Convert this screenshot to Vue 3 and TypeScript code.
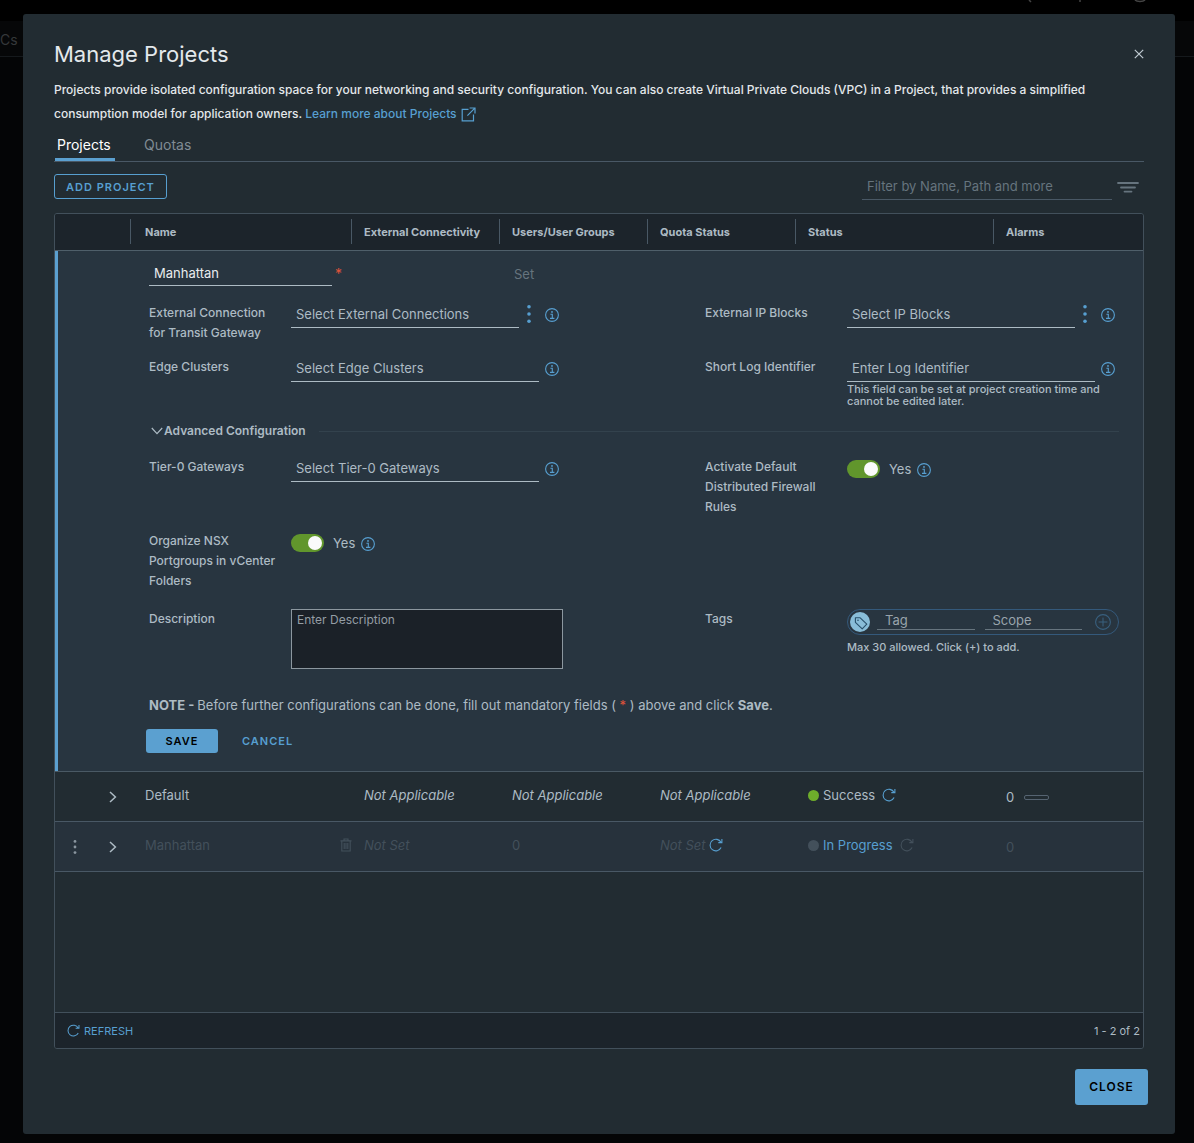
<script setup lang="ts">
import { ref } from 'vue'

interface Project {
  name: string
  connectivity: string
  users: string
  quota: string
  status: string
  alarms: string
  pending: boolean
}

const projects: Project[] = [
  {
    name: 'Default',
    connectivity: 'Not Applicable',
    users: 'Not Applicable',
    quota: 'Not Applicable',
    status: 'Success',
    alarms: '0',
    pending: false,
  },
  {
    name: 'Manhattan',
    connectivity: 'Not Set',
    users: '0',
    quota: 'Not Set',
    status: 'In Progress',
    alarms: '0',
    pending: true,
  },
]

const projectName = ref('Manhattan')
const firewallRules = ref(true)
const vcenterFolders = ref(true)
</script>

<template>
  <div class="page">
    <svg width="0" height="0" class="sprite" aria-hidden="true">
      <symbol id="info" viewBox="0 0 14 14">
        <circle cx="7" cy="7" r="6.4" fill="none" stroke="currentColor" stroke-width="1.1" />
        <circle cx="7" cy="3.9" r="0.95" fill="currentColor" />
        <path d="M5.4 6.2h1.9v4.2M5 10.4h4.4" fill="none" stroke="currentColor" stroke-width="1.1" />
      </symbol>
      <symbol id="dots" viewBox="0 0 4 18">
        <circle cx="2" cy="1.8" r="1.8" fill="currentColor" />
        <circle cx="2" cy="9" r="1.8" fill="currentColor" />
        <circle cx="2" cy="16.2" r="1.8" fill="currentColor" />
      </symbol>
      <symbol id="refresh" viewBox="0 0 14 14">
        <path d="M12.1 9.6A5.8 5.8 0 1 1 12 4.3M12.9 1v3.6H9.3" fill="none" stroke="currentColor" stroke-width="1.1" />
      </symbol>
      <symbol id="chevron" viewBox="0 0 8 12">
        <path d="M1 1l5.4 5L1 11" fill="none" stroke="currentColor" stroke-width="1.5" />
      </symbol>
      <symbol id="trash" viewBox="0 0 12 14">
        <path d="M0.5 2.9h11M4 2.6V1h4v1.6M1.8 3v10h8.4V3M4.2 5v6M6 5v6M7.8 5v6" fill="none" stroke="currentColor" stroke-width="1.1" />
      </symbol>
    </svg>

    <div class="behind" aria-hidden="true">
      <div class="behind-top">
        <svg width="120" height="3" viewBox="0 0 120 3">
          <path d="M2 0l2 2M53 0v2M108 0c2 2 8 2 10 0" fill="none" stroke="#444" stroke-width="1.5" />
        </svg>
      </div>
      <div class="behind-tabs">Cs</div>
    </div>

    <main class="modal" role="dialog" aria-labelledby="title">
      <header class="head">
        <h1 id="title">Manage Projects</h1>
        <button type="button" class="x" aria-label="Close dialog">
          <svg width="10" height="10" viewBox="0 0 10 10">
            <path d="M0.8 0.8l8.4 8.4M9.2 0.8L0.8 9.2" stroke="currentColor" stroke-width="1.2" />
          </svg>
        </button>
      </header>
      <p class="intro">
        Projects provide isolated configuration space for your networking and security configuration. You can also create
        Virtual Private Clouds (VPC) in a Project, that provides a simplified consumption model for application owners.
        <a href="#projects">Learn more about Projects<svg width="15" height="15" viewBox="0 0 15 15">
            <path d="M7.5 2.3H1.2v11.5h11.3V7.6M6.4 8.6L13.8 1.2M8.6 1h5.4v5.4" fill="none" stroke="currentColor" stroke-width="1.2" />
          </svg></a>
      </p>

      <div class="tabs" role="tablist">
        <button type="button" role="tab" class="tab active" aria-selected="true">Projects</button>
        <button type="button" role="tab" class="tab" aria-selected="false">Quotas</button>
      </div>

      <div class="toolbar">
        <button type="button" class="btn outline">ADD PROJECT</button>
        <div class="filter">
          <input type="text" placeholder="Filter by Name, Path and more" aria-label="Filter" />
          <button type="button" class="bare" aria-label="Filter options">
            <svg width="22" height="12" viewBox="0 0 22 12">
              <path d="M1 2h20M4 6.5h14M7.5 10.6h7" stroke="currentColor" stroke-width="1.8" stroke-linecap="round" />
            </svg>
          </button>
        </div>
      </div>

      <section class="grid">
        <table>
          <colgroup>
            <col class="c-act" /><col /><col class="c-mid" /><col class="c-mid" /><col class="c-mid" /><col class="c-status" /><col class="c-alarm" />
          </colgroup>
          <thead>
            <tr>
              <th><div>&nbsp;</div></th>
              <th class="name"><div>Name</div></th>
              <th><div>External Connectivity</div></th>
              <th><div>Users/User Groups</div></th>
              <th><div>Quota Status</div></th>
              <th><div>Status</div></th>
              <th><div>Alarms</div></th>
            </tr>
          </thead>
          <tbody>
            <tr class="edit">
              <td colspan="7">
                <form @submit.prevent>
                  <div class="name-row">
                    <input v-model="projectName" type="text" class="line name-input" aria-label="Name" required />
                    <span class="req">*</span>
                    <button type="button" class="bare set" disabled>Set</button>
                  </div>

                  <div class="fields">
                    <div class="field">
                      <label for="ext">External Connection for Transit Gateway</label>
                      <div class="control">
                        <input id="ext" type="text" class="line" placeholder="Select External Connections" />
                        <button type="button" class="bare more" aria-label="More actions"><svg width="4" height="18"><use href="#dots" /></svg></button>
                        <button type="button" class="bare info" aria-label="Info"><svg width="14" height="14"><use href="#info" /></svg></button>
                      </div>
                    </div>
                    <div class="field">
                      <label for="ip">External IP Blocks</label>
                      <div class="control">
                        <input id="ip" type="text" class="line" placeholder="Select IP Blocks" />
                        <button type="button" class="bare more" aria-label="More actions"><svg width="4" height="18"><use href="#dots" /></svg></button>
                        <button type="button" class="bare info" aria-label="Info"><svg width="14" height="14"><use href="#info" /></svg></button>
                      </div>
                    </div>
                    <div class="field">
                      <label for="edge">Edge Clusters</label>
                      <div class="control">
                        <input id="edge" type="text" class="line" placeholder="Select Edge Clusters" />
                        <button type="button" class="bare info" aria-label="Info"><svg width="14" height="14"><use href="#info" /></svg></button>
                      </div>
                    </div>
                    <div class="field">
                      <label for="log">Short Log Identifier</label>
                      <div>
                        <div class="control">
                          <input id="log" type="text" class="line" placeholder="Enter Log Identifier" />
                          <button type="button" class="bare info" aria-label="Info"><svg width="14" height="14"><use href="#info" /></svg></button>
                        </div>
                        <p class="hint">This field can be set at project creation time and cannot be edited later.</p>
                      </div>
                    </div>

                    <button type="button" class="bare advanced" aria-expanded="true">
                      <svg width="12" height="8" viewBox="0 0 12 8">
                        <path d="M0.8 1L6 6.6 11.2 1" fill="none" stroke="currentColor" stroke-width="1.2" />
                      </svg>
                      <span>Advanced Configuration</span>
                      <i></i>
                    </button>

                    <div class="field">
                      <label for="tier">Tier-0 Gateways</label>
                      <div class="control">
                        <input id="tier" type="text" class="line" placeholder="Select Tier-0 Gateways" />
                        <button type="button" class="bare info" aria-label="Info"><svg width="14" height="14"><use href="#info" /></svg></button>
                      </div>
                    </div>
                    <div class="field">
                      <label for="fw">Activate Default Distributed Firewall Rules</label>
                      <div class="control switch">
                        <input id="fw" v-model="firewallRules" type="checkbox" class="toggle" />
                        <span>Yes</span>
                        <button type="button" class="bare info" aria-label="Info"><svg width="14" height="14"><use href="#info" /></svg></button>
                      </div>
                    </div>
                    <div class="field wide">
                      <label for="folders">Organize NSX Portgroups in vCenter Folders</label>
                      <div class="control switch">
                        <input id="folders" v-model="vcenterFolders" type="checkbox" class="toggle" />
                        <span>Yes</span>
                        <button type="button" class="bare info" aria-label="Info"><svg width="14" height="14"><use href="#info" /></svg></button>
                      </div>
                    </div>
                    <div class="field">
                      <label for="desc">Description</label>
                      <textarea id="desc" placeholder="Enter Description"></textarea>
                    </div>
                    <div class="field">
                      <label for="tag">Tags</label>
                      <div>
                        <div class="pill">
                          <span class="tag-mark">
                            <svg width="14" height="14" viewBox="0 0 14 14">
                              <path d="M1.4 6.3V1.8h4.8l6.6 6.3-4.6 4.7z" fill="none" stroke="currentColor" stroke-width="1.1" stroke-linejoin="round" />
                              <circle cx="4" cy="4.3" r="0.8" fill="currentColor" />
                            </svg>
                          </span>
                          <input id="tag" type="text" placeholder="Tag" />
                          <input type="text" placeholder="Scope" aria-label="Scope" />
                          <button type="button" class="bare plus" aria-label="Add tag">
                            <svg width="16" height="16" viewBox="0 0 16 16">
                              <path d="M8 3.6v8.8M3.6 8h8.8" stroke="currentColor" stroke-width="1" />
                              <circle cx="8" cy="8" r="7.4" fill="none" stroke="currentColor" stroke-width="1.1" />
                            </svg>
                          </button>
                        </div>
                        <p class="hint tags-hint">Max 30 allowed. Click (+) to add.</p>
                      </div>
                    </div>
                  </div>

                  <p class="note">
                    <b>NOTE - </b>Before further configurations can be done, fill out mandatory fields (
                    <span class="req-mark">*</span> ) above and click <b>Save</b>.
                  </p>
                  <div class="actions">
                    <button type="submit" class="btn solid">SAVE</button>
                    <button type="button" class="btn flat">CANCEL</button>
                  </div>
                </form>
              </td>
            </tr>

            <tr v-for="p in projects" :key="p.name" class="row" :class="{ pending: p.pending }">
              <td>
                <div class="act">
                  <span><button v-if="p.pending" type="button" class="bare" aria-label="Row actions"><svg width="4" height="14"><use href="#dots" /></svg></button></span>
                  <button type="button" class="bare caret" aria-label="Expand"><svg width="8" height="12"><use href="#chevron" /></svg></button>
                </div>
              </td>
              <td class="name">
                <div class="cell spread">
                  {{ p.name }}
                  <svg v-if="p.pending" width="12" height="14"><use href="#trash" /></svg>
                </div>
              </td>
              <td><em>{{ p.connectivity }}</em></td>
              <td>
                <span v-if="p.pending">{{ p.users }}</span>
                <em v-else>{{ p.users }}</em>
              </td>
              <td>
                <div class="cell">
                  <em>{{ p.quota }}</em>
                  <button v-if="p.pending" type="button" class="bare link quota" aria-label="Refresh quota"><svg width="14" height="14"><use href="#refresh" /></svg></button>
                </div>
              </td>
              <td>
                <div class="cell">
                  <span class="dot"></span>
                  <span class="state">{{ p.status }}</span>
                  <button type="button" class="bare reload" aria-label="Refresh status"><svg width="14" height="14"><use href="#refresh" /></svg></button>
                </div>
              </td>
              <td class="alarm">
                <div class="cell">{{ p.alarms }}<span v-if="!p.pending" class="bar"></span></div>
              </td>
            </tr>
          </tbody>
        </table>
        <div class="filler"></div>
        <footer class="grid-foot">
          <button type="button" class="bare link">
            <svg width="13" height="13"><use href="#refresh" /></svg>REFRESH
          </button>
          <span>1 - 2 of 2</span>
        </footer>
      </section>

      <div class="modal-foot">
        <button type="button" class="btn solid big">CLOSE</button>
      </div>
    </main>
  </div>
</template>

<style>
body {
  background: #040506;
}
</style>

<style scoped>
* {
  box-sizing: border-box;
}
.page {
  position: relative;
  display: flex;
  min-height: 100vh;
  padding: 14px 19px 9px 23px;
  color: #adbbc4;
  font: 13px/20px Inter, "Noto Sans", sans-serif;
}
.sprite {
  position: absolute;
}
.behind {
  position: absolute;
  inset: 0;
}
.behind-top {
  display: flex;
  justify-content: flex-end;
  height: 21px;
  padding-right: 47px;
  background: #000;
}
.behind-tabs {
  height: 36px;
  border-bottom: 1px solid #15191c;
  background: #060708;
  color: #35383a;
  font-size: 14px;
  line-height: 38px;
}
.modal {
  position: relative;
  display: flex;
  flex: 1;
  flex-direction: column;
  min-width: 0;
  padding: 26px 31px 29px;
  border-radius: 3px;
  background: #222c32;
}
button,
input,
textarea {
  font: inherit;
  color: inherit;
}
button {
  cursor: pointer;
}
svg {
  display: block;
  flex: none;
}
.bare {
  display: flex;
  align-items: center;
  padding: 0;
  border: 0;
  background: none;
}
.head {
  display: flex;
  justify-content: space-between;
}
h1 {
  margin: 0;
  color: #e4e9ec;
  font-size: 22px;
  font-weight: 400;
  line-height: 28px;
}
.x {
  display: flex;
  align-items: center;
  padding: 0;
  border: 0;
  background: none;
  color: #c0cbd2;
}
.intro {
  margin: 10px 0 0;
  color: #e4e8eb;
  font-size: 12px;
  font-weight: 500;
  line-height: 24px;
}
a {
  display: inline-flex;
  align-items: center;
  gap: 4px;
  height: 24px;
  color: #579fd0;
  text-decoration: none;
  vertical-align: top;
}
.tabs {
  display: flex;
  gap: 27px;
  padding-left: 1px;
  border-bottom: 1px solid #495865;
}
.tab {
  min-width: 60px;
  padding: 9px 2px 3px;
  border: 0;
  border-bottom: 3px solid transparent;
  background: none;
  color: #808b94;
  font-size: 14px;
  text-align: left;
}
.tab.active {
  border-color: #5ba0d0;
  color: #fff;
}
.toolbar {
  display: flex;
  justify-content: space-between;
  margin: 12px 0 13px;
}
.btn {
  height: 24px;
  padding: 0 12px;
  border: 0;
  border-radius: 3px;
  background: none;
  color: #579fd0;
  font-size: 11px;
  font-weight: 600;
  letter-spacing: 1px;
}
.outline {
  height: 25px;
  padding: 0 11px;
  border: 1px solid #579fd0;
}
.solid {
  width: 72px;
  background: #5ba0d0;
  color: #000;
}
.big {
  width: 73px;
  height: 36px;
  font-size: 12px;
}
.filter {
  display: flex;
  gap: 5px;
  padding-right: 5px;
  color: #66747e;
}
.filter input {
  width: 250px;
  height: 26px;
  padding: 0 5px 1px;
  border: 0;
  border-bottom: 1px solid #495865;
  background: none;
}
::placeholder {
  color: inherit;
  opacity: 1;
}
.grid {
  display: flex;
  flex: 1;
  flex-direction: column;
  overflow: hidden;
  border: 1px solid #42505b;
  border-radius: 3px;
}
table {
  width: 100%;
  border-collapse: separate;
  border-spacing: 0;
  table-layout: fixed;
}
.c-act {
  width: 76px;
}
.c-mid {
  width: 148px;
}
.c-status {
  width: 198px;
}
.c-alarm {
  width: 149px;
}
th {
  padding: 5px 0 6px;
  border-bottom: 1px solid #4f5f6a;
  background: #1c242b;
  text-align: left;
  font-size: 11px;
  font-weight: 700;
  white-space: nowrap;
}
th div {
  height: 25px;
  padding-left: 12px;
  border-right: 1px solid #495865;
  line-height: 26px;
}
th.name div {
  padding-left: 14px;
}
th:last-child div {
  border: 0;
}
.edit td {
  padding: 0;
  border-bottom: 1px solid #4a5964;
  background: #283540;
}
form {
  padding: 10px 24px 18px 91px;
  border-left: 3px solid #5ba0d0;
}
.name-row {
  display: flex;
  align-items: center;
}
.line {
  flex: 1;
  min-width: 0;
  height: 25px;
  padding: 0 5px 2px;
  border: 0;
  border-bottom: 1px solid #adbbc4;
  background: none;
}
.name-input {
  flex: none;
  width: 183px;
  padding-bottom: 0;
  color: #e9ecef;
}
.req {
  width: 182px;
  padding-left: 3px;
  color: #e0533a;
  font-size: 14px;
}
.req-mark {
  color: #e0533a;
}
.set {
  color: #66747e;
}
.fields {
  display: grid;
  grid-template-columns: 1fr 1fr;
  gap: 14px 142px;
  margin-top: 17px;
}
.field {
  display: grid;
  grid-template-columns: 130px minmax(0, 1fr);
  column-gap: 12px;
  align-items: start;
}
.field label {
  font-size: 12px;
  font-weight: 500;
}
.wide {
  grid-column: 1 / -1;
  padding-bottom: 4px;
}
.control {
  display: flex;
  padding-right: 4px;
}
.more {
  width: 20px;
  justify-content: center;
  color: #579fd0;
  padding-bottom: 4px;
}
.info {
  margin-left: 6px;
  padding-bottom: 1px;
  color: #579fd0;
}
.switch {
  align-items: center;
  height: 24px;
}
.switch .info {
  padding: 2px 0 0;
}
.toggle {
  width: 33px;
  height: 18px;
  margin: 0 9px 0 0;
  padding: 2px;
  border-radius: 9px;
  background: #61962c;
  appearance: none;
}
.toggle::before {
  display: block;
  width: 14px;
  height: 14px;
  margin-left: 15px;
  border-radius: 50%;
  background: #fafafa;
  content: "";
}
.toggle:not(:checked) {
  background: #66747e;
}
.toggle:not(:checked)::before {
  margin-left: 0;
}
.hint {
  margin: 1px 0 0;
  font-size: 11px;
  font-weight: 500;
  line-height: 12px;
}
.tags-hint {
  margin-top: 6px;
}
.advanced {
  grid-column: 1 / -1;
  margin-bottom: 2px;
  padding-left: 2px;
  color: #adbbc4;
}
.advanced span {
  padding: 0 13px 0 1px;
  font-size: 12px;
  font-weight: 600;
}
.advanced i {
  flex: 1;
  height: 1px;
  background: #33424d;
}
textarea {
  display: block;
  width: 100%;
  height: 60px;
  padding: 0 5px;
  border: 1px solid #8c979f;
  background: #1b2128;
  color: #949da4;
  font-size: 12px;
  resize: none;
}
.pill {
  display: flex;
  align-items: center;
  height: 26px;
  padding: 0 7px 0 2px;
  border: 1px solid #34597b;
  border-radius: 13px;
}
.tag-mark {
  display: flex;
  align-items: center;
  justify-content: center;
  width: 20px;
  height: 20px;
  margin-right: 7px;
  padding: 2px 0 0 2px;
  border-radius: 50%;
  background: #89bdd8;
  color: #28506b;
}
.pill input {
  flex: 1;
  min-width: 0;
  height: 20px;
  margin: 0 10px 4px 0;
  padding: 0 8px;
  border: 0;
  border-bottom: 1px solid #66747e;
  background: none;
  color: #99a4ac;
}
.plus {
  margin-left: 3px;
  color: #39607f;
}
.note {
  margin: 26px 0 14px;
}
.actions {
  display: flex;
  gap: 12px;
  margin-left: -3px;
}
.row td {
  height: 50px;
  padding: 13px 0 0 12px;
  border-bottom: 1px solid #495865;
  vertical-align: top;
  white-space: nowrap;
}
.row td.name {
  padding-left: 14px;
}
.row td:first-child {
  padding: 0;
  vertical-align: middle;
}
.row td.alarm {
  padding-top: 15px;
}
.pending {
  background: #27323c;
  color: #43505b;
}
.act {
  display: flex;
  align-items: center;
  color: #adbbc4;
}
.act span {
  width: 54px;
  padding-left: 18px;
  color: #8a969f;
}
.cell {
  display: flex;
  align-items: center;
}
.spread {
  justify-content: space-between;
}
.dot {
  width: 11px;
  height: 11px;
  margin-right: 4px;
  border-radius: 50%;
  background: #6ead2b;
}
.pending .dot {
  background: #43505b;
}
.pending .state,
.link {
  color: #579fd0;
}
.reload {
  margin-left: 7px;
  color: #579fd0;
}
.pending .reload {
  color: #43505b;
}
.quota {
  margin-left: 3px;
}
.bar {
  width: 25px;
  height: 5px;
  margin-left: 10px;
  border: 1px solid #566472;
  border-radius: 2px;
}
.filler {
  flex: 1;
  min-height: 140px;
}
.grid-foot {
  display: flex;
  align-items: center;
  justify-content: space-between;
  height: 36px;
  padding: 0 3px 0 12px;
  border-top: 1px solid #42505b;
  background: #1c242b;
  font-size: 11px;
}
.grid-foot .link {
  gap: 4px;
}
.modal-foot {
  display: flex;
  justify-content: flex-end;
  margin: 20px -4px 0 0;
}
</style>
